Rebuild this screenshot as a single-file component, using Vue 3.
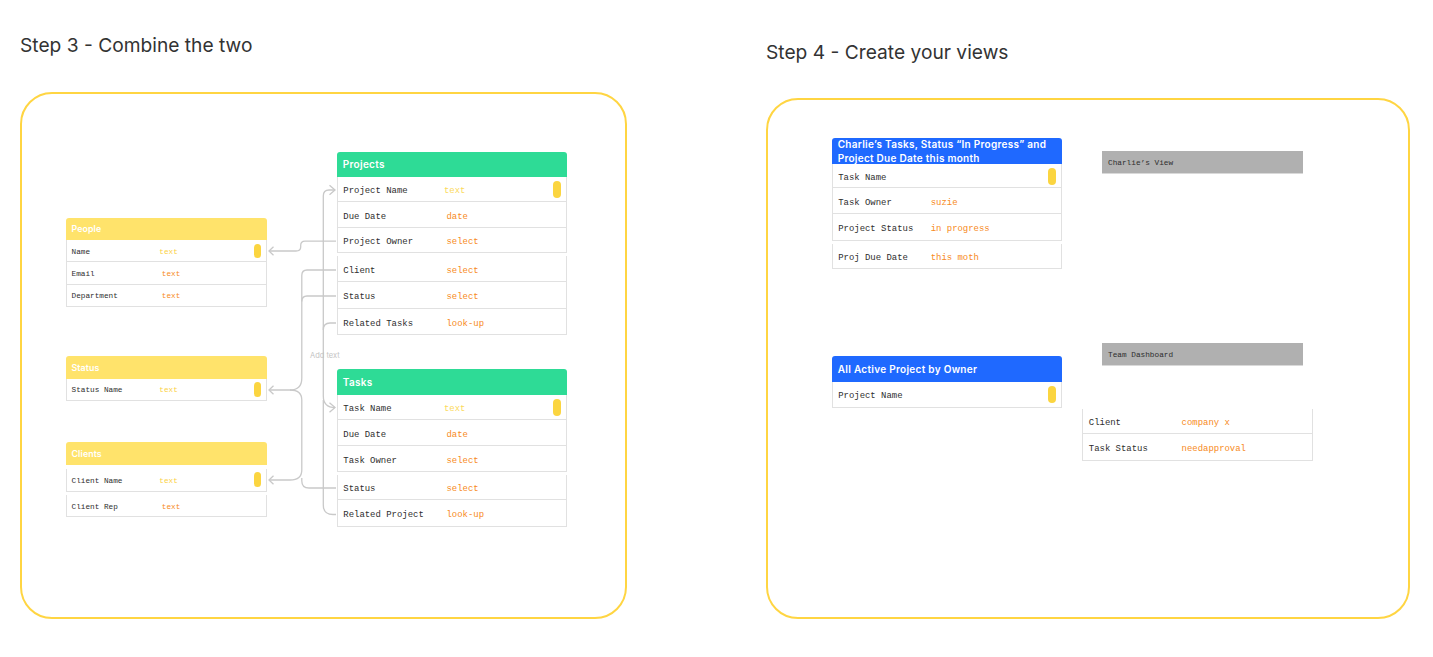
<script setup>
const r = (label, value, opts = {}) => ({ label, value, ...opts })

const step3Origin = { x: 22, y: 94 }
const step4Origin = { x: 768, y: 100 }

const step3Tables = [
  {
    title: 'Projects', tone: 'green', size: 'large', x: 336.8, y: 151.7, w: 230.3, valueX: 108.2, headH: 25.3,
    groups: [
      { rows: [r('Project Name', 'text', { key: true, h: 25.5 }), r('Due Date', 'date', { h: 25.5 }), r('Project Owner', 'select', { h: 25.5 })] },
      { gap: 3, rows: [r('Client', 'select', { h: 26 }), r('Status', 'select', { h: 26.3 }), r('Related Tasks', 'look-up', { h: 26.7 })] }
    ]
  },
  {
    title: 'Tasks', tone: 'green', size: 'large', x: 336.8, y: 369.4, w: 230.3, valueX: 108.2, headH: 25.6,
    groups: [
      { rows: [r('Task Name', 'text', { key: true, h: 25.4 }), r('Due Date', 'date', { h: 26 }), r('Task Owner', 'select', { h: 25.6 })] },
      { gap: 2.8, rows: [r('Status', 'select', { h: 25.6 }), r('Related Project', 'look-up', { h: 26.4 })] }
    ]
  },
  {
    title: 'People', tone: 'yellow', size: 'small', x: 66, y: 217.5, w: 201, valueX: 95.3, headH: 22.5,
    groups: [{ rows: [r('Name', 'text', { key: true, h: 22.3 }), r('Email', 'text', { h: 22.4 }), r('Department', 'text', { h: 22 })] }]
  },
  {
    title: 'Status', tone: 'yellow', size: 'small', x: 66, y: 356.3, w: 201, valueX: 95.3, headH: 22.5,
    groups: [{ rows: [r('Status Name', 'text', { key: true, h: 22.2 })] }]
  },
  {
    title: 'Clients', tone: 'yellow', size: 'small', x: 66, y: 442.3, w: 201, valueX: 95.3, headH: 22.4,
    groups: [
      { gap: 4.3, rows: [r('Client Name', 'text', { key: true, h: 22.7 })] },
      { gap: 3.4, rows: [r('Client Rep', 'text', { h: 22.3 })] }
    ]
  }
]

const step4Tables = [
  {
    title: 'Charlie’s Tasks, Status “In Progress” and Project Due Date this month', tone: 'blue', size: 'large', x: 831.7, y: 138.3, w: 230.7, valueX: 97.5, headH: 25.4,
    groups: [
      { rows: [r('Task Name', '', { key: true, h: 24.7 }), r('Task Owner', 'suzie', { h: 26 }), r('Project Status', 'in progress', { h: 26.4 })] },
      { gap: 3.3, rows: [r('Proj Due Date', 'this moth', { h: 25.3 })] }
    ]
  },
  {
    title: 'All Active Project by Owner', tone: 'blue', size: 'large', x: 831.7, y: 356, w: 230.7, valueX: 97.5, headH: 25.7,
    groups: [{ rows: [r('Project Name', '', { key: true, h: 26 })] }]
  },
  {
    title: '', tone: 'none', size: 'large', x: 1082.3, y: 409, w: 230.7, valueX: 97.8, headH: 0,
    groups: [{ rows: [r('Client', 'company x', { h: 25.4 }), r('Task Status', 'needapproval', { h: 26.4 })] }]
  }
]

const viewBars = [
  { label: 'Charlie’s View', x: 1102, y: 151 },
  { label: 'Team Dashboard', x: 1102, y: 342.5 }
]

const connectors = [
  'M336 241.2H305Q300.7 241.2 300.7 245.5V247Q300.7 251 296 251H269',
  'M273.5 246.8L269 251L273.5 255.2',
  'M336 270H307Q301.8 270 301.8 275.5V378Q301.8 390 290 390H269',
  'M336 296H307Q301.8 296 301.8 301.5',
  'M273.5 385.8L269 390L273.5 394.2',
  'M290 390Q301.8 390 301.8 400V470Q301.8 480 290 480H269',
  'M273.5 475.8L269 480L273.5 484.2',
  'M301.8 478V481Q301.8 488 309 488H336',
  'M335 190H329Q323.3 190 323.3 196V396Q323.3 407.5 335 407.5',
  'M329.5 185.3L335 190L329.5 194.7',
  'M329.5 402.8L335 407.5L329.5 412.2',
  'M336 323H330Q323.3 323 323.3 330',
  'M323.3 400V505Q323.3 514.5 333 514.5H336'
]

const tableStyle = (t, o) => ({
  left: `${t.x - o.x}px`,
  top: `${t.y - o.y}px`,
  width: `${t.w}px`,
  '--head-h': `${t.headH}px`,
  '--value-x': `${t.valueX}px`
})
const rowStyle = (row) => ({ height: `${row.h}px` })
const groupStyle = (g) => ({ marginTop: `${g.gap || 0}px` })
const barStyle = (b) => ({ left: `${b.x - step4Origin.x}px`, top: `${b.y - step4Origin.y}px` })
</script>

<template>
  <main class="page">
    <section class="step step-three">
      <h2 class="step-title">Step 3 - Combine the two</h2>
      <div class="frame">
        <svg class="wires" viewBox="22 94 603 523" aria-hidden="true">
          <path v-for="(d, i) in connectors" :key="i" :d="d" />
        </svg>
        <span class="wire-label">Add text</span>
        <article
          v-for="t in step3Tables"
          :key="t.title"
          class="table"
          :class="t.size"
          :style="tableStyle(t, step3Origin)"
        >
          <header class="head" :class="t.tone">{{ t.title }}</header>
          <div v-for="(g, gi) in t.groups" :key="gi" class="group" :style="groupStyle(g)">
            <div v-for="row in g.rows" :key="row.label" class="row" :style="rowStyle(row)">
              <span class="label">{{ row.label }}</span>
              <span class="value" :class="{ keyed: row.key }">{{ row.value }}</span>
              <i v-if="row.key" class="pill"></i>
            </div>
          </div>
        </article>
      </div>
    </section>

    <section class="step step-four">
      <h2 class="step-title">Step 4 - Create your views</h2>
      <div class="frame">
        <article
          v-for="t in step4Tables"
          :key="t.x + '-' + t.y"
          class="table"
          :class="t.size"
          :style="tableStyle(t, step4Origin)"
        >
          <header v-if="t.title" class="head" :class="[t.tone, { tall: t.title.length > 40 }]">{{ t.title }}</header>
          <div v-for="(g, gi) in t.groups" :key="gi" class="group" :style="groupStyle(g)">
            <div v-for="row in g.rows" :key="row.label" class="row" :style="rowStyle(row)">
              <span class="label">{{ row.label }}</span>
              <span class="value">{{ row.value }}</span>
              <i v-if="row.key" class="pill"></i>
            </div>
          </div>
        </article>
        <div v-for="b in viewBars" :key="b.label" class="view-bar" :style="barStyle(b)">{{ b.label }}</div>
      </div>
    </section>
  </main>
</template>

<style scoped>
.page {
  display: flex;
  align-items: flex-start;
  width: 1433px;
  height: 657px;
  overflow: hidden;
  background: #fff;
  color: #333;
}
.step {
  flex: none;
}
.step-three {
  width: 607px;
  margin-left: 20px;
  padding-top: 33px;
}
.step-four {
  width: 644px;
  margin-left: 139px;
  padding-top: 40px;
}
.step-title {
  margin: 0;
  font: 400 19.2px/24px Inter, "Liberation Sans", sans-serif;
  color: #333;
}
.step-three .step-title {
  margin-bottom: 35px;
}
.step-four .step-title {
  margin-bottom: 34px;
}
.frame {
  position: relative;
  box-sizing: border-box;
  border: 2px solid #ffd542;
  border-radius: 32px;
}
.step-three .frame {
  height: 527px;
}
.step-four .frame {
  height: 521px;
}
.wires {
  position: absolute;
  left: 0;
  top: 0;
  width: 603px;
  height: 523px;
  fill: none;
  stroke: #c9c9c9;
  stroke-width: 1.3;
}
.wire-label {
  position: absolute;
  left: 288px;
  top: 257px;
  font: 400 7.5px/10px Inter, "Liberation Sans", sans-serif;
  color: #c4c4c4;
}
.table {
  position: absolute;
}
.head {
  box-sizing: border-box;
  display: flex;
  align-items: center;
  height: var(--head-h);
  padding: 0 6px;
  border-radius: 3px 3px 0 0;
  color: #fff;
  font-family: Inter, "Liberation Sans", sans-serif;
  font-weight: 600;
  line-height: 13.2px;
}
.large .head {
  padding-top: 1.5px;
  font-size: 10px;
  letter-spacing: 0.3px;
}
.small .head {
  padding: 0 5.5px;
  font-size: 8.8px;
  letter-spacing: 0.1px;
}
.large .head.tall {
  padding-top: 1px;
  letter-spacing: 0.28px;
}
.green {
  background: #2edb96;
}
.yellow {
  background: #ffe36b;
}
.blue {
  background: #1f69ff;
}
.row {
  position: relative;
  box-sizing: border-box;
  display: flex;
  align-items: center;
  border: 1px solid #e1e1e1;
  border-top: 0;
  background: #fff;
  font-family: "Liberation Mono", "DejaVu Sans Mono", monospace;
}
.large .row {
  font-size: 8.95px;
  padding: 4px 0 0 5.5px;
}
.small .row {
  font-size: 7.73px;
  padding: 2px 0 0 4.5px;
}
.label {
  flex: none;
  width: calc(var(--value-x) - 5px);
  color: #2e2e2e;
}
.value {
  color: #f78a22;
}
.large .value.keyed {
  margin-left: -2.5px;
  color: #fbd95a;
}
.small .value.keyed {
  margin-left: -2.5px;
  color: #fbd143;
}
.pill {
  position: absolute;
  border-radius: 4px;
  background: #fbd540;
}
.large .pill {
  right: 5px;
  top: 4.5px;
  width: 8.5px;
  height: 16.5px;
}
.small .pill {
  right: 5px;
  top: 3.5px;
  width: 7.4px;
  height: 14.8px;
}
.view-bar {
  position: absolute;
  box-sizing: border-box;
  display: flex;
  align-items: center;
  width: 201px;
  height: 23px;
  padding: 2px 0 0 6px;
  border-bottom: 1px solid #d9d9d9;
  background: #b0b0b0;
  color: #2e2e2e;
  font-family: "Liberation Mono", "DejaVu Sans Mono", monospace;
  font-size: 7.75px;
}
</style>
